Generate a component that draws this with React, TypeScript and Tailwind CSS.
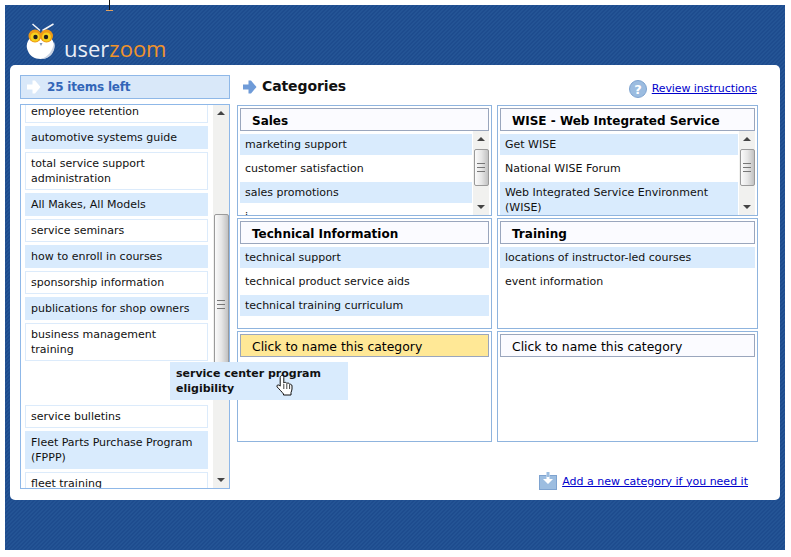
import { ReactNode } from "react";

const sideItems = [
  { text: "employee retention" },
  { text: "automotive systems guide", on: true },
  { text: "total service support administration" },
  { text: "All Makes, All Models", on: true },
  { text: "service seminars" },
  { text: "how to enroll in courses", on: true },
  { text: "sponsorship information" },
  { text: "publications for shop owners", on: true },
  { text: "business management training" },
  { text: "", gap: true },
  { text: "service bulletins" },
  { text: "Fleet Parts Purchase Program (FPPP)", on: true },
  { text: "fleet training" },
];

const Arrow = ({ color }: { color: string }) => (
  <svg width="15" height="16" viewBox="0 0 15 16">
    <path d="M1 5.500h5.500V1.500h2.500L14.500 8 9 14.500H6.500v-4H1z" fill={color} />
  </svg>
);

const Owl = () => (
  <svg width="30" height="37" viewBox="0 0 30 37">
    <path d="M6.500 1l7.500 6.500M27.500 1l-11 6.500" stroke="#f4f6fa" strokeWidth="1.500" fill="none" />
    <path d="M1.500 27c-2-5 0-10 4-13h18c4 3 6 8 4 13-2 6-7 9-13 9s-11-3-13-9z" fill="#ffffff" />
    <path d="M15 36c6 0 11-3 13-9 1-3 1-6 0-8-1 9-6 15-13 17z" fill="#c9d3e3" />
    <circle cx="9" cy="13" r="6.500" fill="#ee9a17" />
    <circle cx="20.500" cy="13" r="6.500" fill="#ee9a17" />
    <circle cx="9" cy="14" r="4.500" fill="#f6d21f" />
    <circle cx="20.500" cy="14" r="4.500" fill="#f6d21f" />
    <circle cx="9.500" cy="14" r="2.200" fill="#1f1f1f" />
    <circle cx="20" cy="14" r="2.200" fill="#1f1f1f" />
    <path d="M13.500 20l1.500 3 1.500-3z" fill="#7f95b8" />
  </svg>
);

const Hand = () => (
  <svg width="17" height="21" viewBox="0 0 17 21">
    <path
      d="M6 .500c1 0 1.800.8 1.800 1.800V8c.8-1 2.700-.8 3 .5.8-.8 2.600-.5 2.800.9.8-.5 2.400 0 2.400 1.600v3c0 1.500-.8 2.500-1 3.500v2.500H7.500V19C6 17 3.500 14.500 1.200 12c-1-1.300.5-2.800 2-1.700l1 .8V2.300C4.200 1.300 5 .5 6 .5z"
      fill="#fff"
      stroke="#111"
      strokeWidth="1"
    />
    <path d="M7.800 9v5M10.800 9v5M13.600 10v4" stroke="#111" strokeWidth=".8" />
  </svg>
);

const Scrollbar = ({ thumb, offset, className }: { thumb: string; offset: string; className: string }) => (
  <div className={`flex flex-col bg-[#f1f1ef] items-center ${className}`}>
    <div className="h-[16px] flex items-center justify-center">
      <div className="w-0 h-0 border-x-[4px] border-x-transparent border-b-[4px] border-b-[#444]" />
    </div>
    <div className="w-full flex-1">
      <div className={`${thumb} ${offset} mx-[0.5px] rounded-[2px] border border-[#9a9a9a] bg-gradient-to-r from-[#fbfbfb] via-[#e6e6e6] to-[#c2c2c2] flex items-center justify-center`}>
        <div className="w-[8px] h-[9px] border-y border-[#777] flex items-center">
          <div className="w-full h-px bg-[#777]" />
        </div>
      </div>
    </div>
    <div className="h-[16px] flex items-center justify-center">
      <div className="w-0 h-0 border-x-[4px] border-x-transparent border-t-[4px] border-t-[#444]" />
    </div>
  </div>
);

const Row = ({ children, on }: { children: ReactNode; on?: boolean }) => (
  <div className={`px-[5px] py-[3px] text-[11px] leading-[15px] text-[#111] ${on ? "bg-[#d9ebfd]" : "bg-white"}`}>{children}</div>
);

const Box = ({ title, rows, named = true, yellow, scroll }: { title: string; rows?: string[]; named?: boolean; yellow?: boolean; scroll?: boolean }) => (
  <div className="border border-[#8fb4de] bg-white px-[2px] pt-[2px] h-[111px] overflow-hidden flex flex-col">
    <div
      className={`h-[23px] shrink-0 overflow-hidden border border-[#9aa6bd] pl-[11px] leading-[23px] text-black ${named ? "font-bold text-[12px] pt-px" : "text-[12.4px]"} ${
        yellow ? "bg-[#ffe896]" : "bg-[#fbfbff]"
      }`}
    >
      {title}
    </div>
    <div className="flex flex-1 min-h-0">
      <div className="flex-1 min-w-0 flex flex-col gap-[3px] pt-[3px] overflow-hidden">
        {rows?.map((r, i) => (
          <Row key={r} on={i % 2 === 0}>
            {r}
          </Row>
        ))}
      </div>
      {scroll ? <Scrollbar className="w-[16px] ml-px" thumb="h-[37px]" offset="mt-[2px]" /> : null}
    </div>
  </div>
);

export default function App() {
  return (
    <div className="w-[791px] h-[557px] bg-white pl-[5px] pt-[5px] relative font-['DejaVu_Sans',Verdana,sans-serif]">
      <div className="absolute left-[105px] top-0">
        <svg width="9" height="12" viewBox="0 0 9 12">
          <path d="M4.500 0v10" stroke="#111" strokeWidth="1" />
          <path d="M1 10.500h7" stroke="#e0a060" strokeWidth="1" />
        </svg>
      </div>
      <div className="w-[780px] h-[545px] bg-[repeating-linear-gradient(135deg,#1e4c8e_0px,#1e4c8e_1.414px,#245495_1.414px,#245495_2.828px)] flex flex-col">
        <div className="h-[60px] flex items-end pl-[21px] pb-[5px] gap-[8px]">
          <Owl />
          <div className="text-[22px] leading-[34px] font-medium font-['Open_Sans',sans-serif] -mb-[5px]">
            <span className="text-[#e9eef6]">user</span>
            <span className="text-[#f0932b]">zoom</span>
          </div>
        </div>
        <div className="mx-[5px] h-[435px] bg-white rounded-[5px] flex pl-[10px] pt-[10px]">
          <div className="w-[210px] shrink-0 flex flex-col">
            <div className="h-[24px] shrink-0 border border-[#8fb8e8] bg-[#d9e8f9] flex items-center pl-[5px] gap-[6px]">
              <Arrow color="#ffffff" />
              <span className="text-[12px] tracking-[-0.2px] font-bold text-[#3366b8]">25 items left</span>
            </div>
            <div className="mt-[5px] h-[385px] border border-[#8fb8e8] flex overflow-hidden">
              <div className="w-[192px] pl-[4px] overflow-hidden">
                <div className="w-[183px] -mt-[5px] flex flex-col gap-[3px]">
                  {sideItems.map((it, i) =>
                    it.gap ? (
                      <div key={i} className="h-[38px]" />
                    ) : (
                      <div
                        key={i}
                        className={`border px-[5px] py-[3px] text-[11px] leading-[15px] text-[#111] ${
                          it.on ? "bg-[#d9ebfd] border-[#d9ebfd]" : "bg-white border-[#dcebfb]"
                        }`}
                      >
                        {it.text}
                      </div>
                    ),
                  )}
                </div>
              </div>
              <Scrollbar className="w-[16px]" thumb="h-[180px]" offset="mt-[93px]" />
            </div>
          </div>
          <div className="ml-[7px] w-[521px]">
            <div className="h-[30px] flex items-start">
              <div className="pl-[5px] pt-[4px]">
                <Arrow color="#6f9bd8" />
              </div>
              <span className="ml-[5px] text-[14px] tracking-[-0.1px] leading-[22px] font-bold text-[#111]">Categories</span>
              <div className="ml-auto mr-px flex items-center gap-[5px] pt-[5px]">
                <svg width="18" height="18" viewBox="0 0 18 18">
                  <circle cx="9" cy="9" r="8.500" fill="#9bbce0" stroke="#7ea3d0" />
                  <text x="9" y="13.500" textAnchor="middle" fontSize="13" fontWeight="bold" fill="#fff" fontFamily="DejaVu Sans">?</text>
                </svg>
                <a className="mb-[2px] text-[11px] tracking-[-0.1px] text-[#0000cc] underline leading-[15px]">Review instructions</a>
              </div>
            </div>
            <div className="grid grid-cols-[255px_261px] gap-x-[5px] gap-y-[2px]">
              <Box title="Sales" rows={["marketing support", "customer satisfaction", "sales promotions", "i"]} scroll />
              <Box
                title="WISE - Web Integrated Service Environment"
                rows={["Get WISE", "National WISE Forum", "Web Integrated Service Environment (WISE)"]}
                scroll
              />
              <Box title="Technical Information" rows={["technical support", "technical product service aids", "technical training curriculum"]} />
              <Box title="Training" rows={["locations of instructor-led courses", "event information"]} />
              <Box title="Click to name this category" named={false} yellow />
              <Box title="Click to name this category" named={false} />
            </div>
            <div className="mt-[30px] flex items-center justify-end gap-[5px] pr-[10px]">
              <svg width="18" height="18" viewBox="0 0 18 18">
                <rect x="0.500" y="3.500" width="17" height="14" fill="#9cbde0" stroke="#7ea3d0" />
                <path d="M7.500 0h3v7H14l-5 5-5-5h3.500z" fill="#fff" />
                <path d="M7.500 0h3v5h-3z" fill="#9cbde0" />
              </svg>
              <a className="text-[11px] text-[#0000cc] underline leading-[15px]">Add a new category if you need it</a>
            </div>
          </div>
        </div>
      </div>
      <div className="absolute left-[170px] top-[362px] w-[178px] h-[38px] bg-[#d9ebfd] px-[6px] py-[4px] text-[11px] leading-[15px] font-bold text-[#111]">
        service center program eligibility
        <div className="absolute left-[106px] top-[13px]">
          <Hand />
        </div>
      </div>
    </div>
  );
}
